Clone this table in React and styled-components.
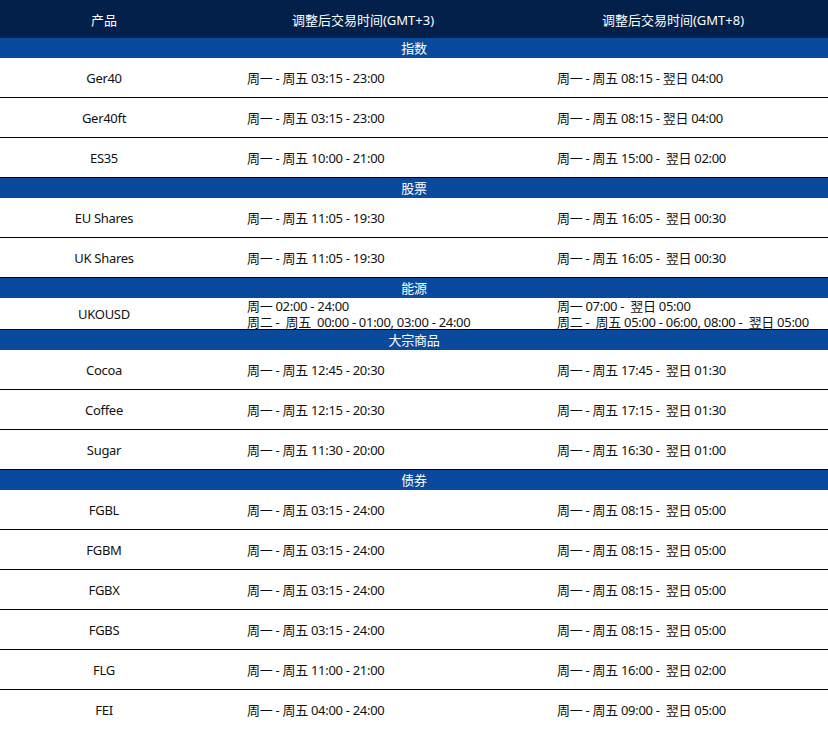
import React from 'react';
import styled, { createGlobalStyle } from 'styled-components';

const GlobalStyle = createGlobalStyle`
    body {
        margin: 0;
        background: #fff;
        font-family: 'Noto Sans', 'Noto Sans CJK SC', sans-serif;
    }
`;

const Table = styled.div`
    width: 828px;
    display: flex;
    flex-direction: column;
    font-size: 13px;
    letter-spacing: -0.3px;
    color: #111;
`;

const HeaderRow = styled.div`
    display: grid;
    grid-template-columns: 208px 310px 310px;
    height: 38px;
    align-items: center;
    background-color: #02204a;
    color: #fff;
    letter-spacing: 0;
`;

const HeaderCell = styled.div`
    text-align: center;
`;

const CategoryBar = styled.div`
    height: 20px;
    line-height: 20px;
    text-align: center;
    background-color: #0a4a9c;
    color: #fff;
`;

const Row = styled.div`
    display: grid;
    grid-template-columns: 208px 310px 310px;
    height: ${props => props.tall ? '32px' : '40px'};
    box-sizing: border-box;
    border-bottom: 1px solid #000;
    align-items: center;
`;

const ProductCell = styled.div`
    text-align: center;
`;

const TimeCell = styled.div`
    padding-left: 39px;
    white-space: pre;
    line-height: 16px;
`;

const groups = [
    {
        name: '指数',
        rows: [
            ['Ger40', ['周一 - 周五 03:15 - 23:00'], ['周一 - 周五 08:15 - 翌日 04:00']],
            ['Ger40ft', ['周一 - 周五 03:15 - 23:00'], ['周一 - 周五 08:15 - 翌日 04:00']],
            ['ES35', ['周一 - 周五 10:00 - 21:00'], ['周一 - 周五 15:00 -  翌日 02:00']],
        ],
    },
    {
        name: '股票',
        rows: [
            ['EU Shares', ['周一 - 周五 11:05 - 19:30'], ['周一 - 周五 16:05 -  翌日 00:30']],
            ['UK Shares', ['周一 - 周五 11:05 - 19:30'], ['周一 - 周五 16:05 -  翌日 00:30']],
        ],
    },
    {
        name: '能源',
        rows: [
            ['UKOUSD',
                ['周一 02:00 - 24:00', '周二 -  周五  00:00 - 01:00, 03:00 - 24:00'],
                ['周一 07:00 -  翌日 05:00', '周二 -  周五 05:00 - 06:00, 08:00 -  翌日 05:00']],
        ],
    },
    {
        name: '大宗商品',
        rows: [
            ['Cocoa', ['周一 - 周五 12:45 - 20:30'], ['周一 - 周五 17:45 -  翌日 01:30']],
            ['Coffee', ['周一 - 周五 12:15 - 20:30'], ['周一 - 周五 17:15 -  翌日 01:30']],
            ['Sugar', ['周一 - 周五 11:30 - 20:00'], ['周一 - 周五 16:30 -  翌日 01:00']],
        ],
    },
    {
        name: '债券',
        rows: [
            ['FGBL', ['周一 - 周五 03:15 - 24:00'], ['周一 - 周五 08:15 -  翌日 05:00']],
            ['FGBM', ['周一 - 周五 03:15 - 24:00'], ['周一 - 周五 08:15 -  翌日 05:00']],
            ['FGBX', ['周一 - 周五 03:15 - 24:00'], ['周一 - 周五 08:15 -  翌日 05:00']],
            ['FGBS', ['周一 - 周五 03:15 - 24:00'], ['周一 - 周五 08:15 -  翌日 05:00']],
            ['FLG', ['周一 - 周五 11:00 - 21:00'], ['周一 - 周五 16:00 -  翌日 02:00']],
            ['FEI', ['周一 - 周五 04:00 - 24:00'], ['周一 - 周五 09:00 -  翌日 05:00']],
        ],
    },
];

const App = () => {
    return (
        <>
            <GlobalStyle />
            <Table>
                <HeaderRow>
                    <HeaderCell>产品</HeaderCell>
                    <HeaderCell>调整后交易时间(GMT+3)</HeaderCell>
                    <HeaderCell>调整后交易时间(GMT+8)</HeaderCell>
                </HeaderRow>
                {groups.map(group => (
                    <React.Fragment key={group.name}>
                        <CategoryBar>{group.name}</CategoryBar>
                        {group.rows.map(([product, gmt3, gmt8]) => (
                            <Row key={product} tall={gmt3.length > 1}>
                                <ProductCell>{product}</ProductCell>
                                <TimeCell>{gmt3.join('\n')}</TimeCell>
                                <TimeCell>{gmt8.join('\n')}</TimeCell>
                            </Row>
                        ))}
                    </React.Fragment>
                ))}
            </Table>
        </>
    );
};

export default App;
